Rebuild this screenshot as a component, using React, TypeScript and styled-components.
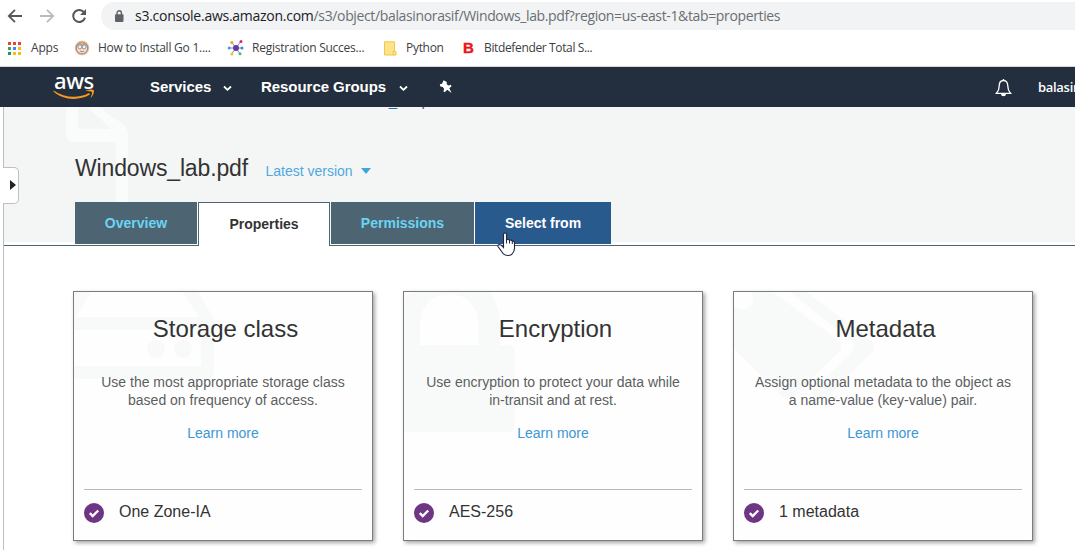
import React from "react";
import styled, { createGlobalStyle } from "styled-components";

const GlobalStyle = createGlobalStyle`
  * { box-sizing: border-box; }
  body {
    margin: 0;
    background: #fff;
    overflow: hidden;
    font-family: "Liberation Sans", Arial, sans-serif;
  }
`;

const Page = styled.div`
  width: 1075px;
  height: 550px;
  display: flex;
  flex-direction: column;
  overflow: hidden;
`;

const Toolbar = styled.div`
  height: 32px;
  flex: none;
  display: flex;
  align-items: center;
  padding-left: 7px;
`;

const ToolIcon = styled.svg`
  flex: none;
  display: block;
  width: 16px;
  height: 16px;
  margin-right: 16px;
`;

const AddressBar = styled.div`
  flex: 1;
  height: 28px;
  margin-left: -2px;
  border-radius: 14px 0 0 14px;
  background: #f1f3f4;
  display: flex;
  align-items: center;
  padding-left: 13px;
  font: 14px/28px "Open Sans", "Noto Sans", sans-serif;
  letter-spacing: -0.36px;
  color: #6b6f73;
  white-space: nowrap;
  svg { margin-right: 11px; flex: none; }
  b { font-weight: 400; color: #202124; letter-spacing: -0.26px; }
`;

const Bookmarks = styled.div`
  height: 35px;
  flex: none;
  display: flex;
  align-items: center;
  padding: 0 0 2px 7px;
  border-bottom: 1px solid #d5d8da;
`;

const Bookmark = styled.div<{ $w: number; $gap: number; $ls: number }>`
  flex: none;
  width: ${(p) => p.$w}px;
  display: flex;
  align-items: center;
  gap: ${(p) => p.$gap}px;
  font: 12px/16px "Open Sans", "Noto Sans", sans-serif;
  letter-spacing: ${(p) => p.$ls}px;
  color: #3c4043;
  white-space: nowrap;
  svg { flex: none; display: block; }
`;

const LetterIcon = styled.span`
  width: 13px;
  flex: none;
  font: 700 15px/16px "Liberation Sans", Arial, sans-serif;
  letter-spacing: 0;
  padding-left: 1px;
  color: #ee1313;
  -webkit-text-stroke: 0.4px #ee1313;
`;

const Nav = styled.div`
  height: 40px;
  flex: none;
  background: #232f3e;
  color: #fff;
  display: flex;
  align-items: center;
  padding-left: 53px;
  font-weight: 700;
  font-size: 15px;
`;

const Logo = styled.div`
  width: 42px;
  height: 40px;
  margin-right: 55px;
  display: flex;
  flex-direction: column;
  padding-top: 2px;
  font: 500 22px/22px "Noto Sans", "Open Sans", sans-serif;
  letter-spacing: -0.4px;
  span { padding-left: 1px; height: 20px; }
  svg { display: block; }
`;

const NavItem = styled.div<{ $w: number }>`
  width: ${(p) => p.$w}px;
  margin-right: 29px;
  display: flex;
  align-items: center;
  justify-content: space-between;
  letter-spacing: -0.05px;
  padding-bottom: 2px;
  white-space: nowrap;
  svg { margin-top: 5px; }
`;

const Pin = styled.svg`
  margin-left: 2px;
`;

const NavRight = styled.div`
  margin-left: auto;
  width: 80px;
  flex: none;
  overflow: hidden;
  display: flex;
  align-items: center;
  gap: 26px;
  white-space: nowrap;
  font: 600 13px/20px "Open Sans", "Noto Sans", sans-serif;
  letter-spacing: -0.3px;
  svg { flex: none; margin-top: 1px; }
`;

const Content = styled.div`
  flex: 1;
  margin-left: 3px;
  border-left: 1px solid #bfbfbf;
  display: flex;
  flex-direction: column;
  position: relative;
`;

const Handle = styled.div`
  position: absolute;
  left: -1px;
  top: 60px;
  width: 16px;
  height: 37px;
  background: #fff;
  border: 1px solid #bfbfbf;
  border-left: 0;
  border-radius: 0 5px 5px 0;
  display: flex;
  align-items: center;
  justify-content: flex-end;
  padding: 0 2px 2px 0;
`;

const Header = styled.div`
  position: relative;
  height: 139px;
  flex: none;
  overflow: hidden;
  background: linear-gradient(#f4f6f6 135px, #fff 135px, #fff 138px, #4d6572 138px);
`;

const HeaderArt = styled.svg`
  position: absolute;
  left: 0;
  top: 0;
`;

const HeaderBody = styled.div`
  position: relative;
  height: 139px;
  padding-left: 71px;
  display: flex;
  flex-direction: column;
`;

const Crumb = styled.div`
  height: 20px;
  flex: none;
  margin-top: -16px;
  padding-left: 253px;
  font-size: 15px;
  line-height: 20px;
  color: #2b6a9a;
`;

const TitleRow = styled.div`
  height: 91px;
  flex: none;
  padding-top: 23px;
  display: flex;
  align-items: center;
  gap: 17.5px;
`;

const Title = styled.h1`
  margin: 0;
  width: 173px;
  font-size: 23px;
  letter-spacing: -0.15px;
  line-height: 36px;
  font-weight: 400;
  color: #333;
  white-space: nowrap;
`;

const Version = styled.div`
  display: flex;
  align-items: center;
  gap: 8px;
  padding-top: 6px;
  font-size: 14px;
  line-height: 20px;
  color: #4fa8dd;
`;

const Tabs = styled.div`
  display: flex;
  align-items: flex-start;
  gap: 1px;
`;

const Tab = styled.div<{ $w: number; $kind: "plain" | "active" | "hover" }>`
  width: ${(p) => p.$w}px;
  height: ${(p) => (p.$kind === "active" ? 44 : 42)}px;
  text-align: center;
  line-height: 42px;
  font-size: 14px;
  font-weight: 700;
  color: ${(p) => ({ plain: "#6bd4f2", active: "#333", hover: "#fff" })[p.$kind]};
  background: ${(p) => ({ plain: "#4d6572", active: "#fff", hover: "#295a8e" })[p.$kind]};
  border: ${(p) => (p.$kind === "active" ? "1px solid #4d6572" : "0")};
  border-bottom: 0;
  box-shadow: ${(p) => (p.$kind === "plain" ? "1px 0 0 #fff" : "none")};
`;

const Cursor = styled.svg`
  position: absolute;
  left: 493px;
  top: 125px;
  z-index: 2;
`;

const Cards = styled.div`
  display: flex;
  gap: 30px;
  padding: 45px 0 0 69px;
`;

const Card = styled.div`
  position: relative;
  width: 300px;
  height: 250px;
  flex: none;
  border: 1px solid #7c7c7c;
  background: #fefefe;
  box-shadow: 2px 2px 4px rgba(0, 0, 0, 0.35);
  padding: 0 10px;
  display: flex;
  flex-direction: column;
  text-align: center;
`;

const CardArt = styled.svg`
  position: absolute;
  left: 0;
  top: 0;
  fill: #f8faf9;
`;

const CardTitle = styled.h2`
  position: relative;
  margin: 20px 0 0 5px;
  font-size: 24px;
  line-height: 34px;
  font-weight: 400;
  color: #333;
`;

const CardText = styled.p`
  position: relative;
  margin: 27px -10px 0;
  font-size: 14px;
  line-height: 18px;
  color: #5c5f61;
`;

const LearnMore = styled.a`
  position: relative;
  margin-top: 15px;
  font-size: 14px;
  line-height: 18px;
  color: #3c97d3;
`;

const Status = styled.div`
  margin-top: auto;
  height: 51px;
  border-top: 1px solid #b9b9b9;
  display: flex;
  align-items: flex-start;
  padding-top: 12px;
  gap: 15px;
  font-size: 16px;
  line-height: 20px;
  color: #333;
  svg { margin-top: 1px; flex: none; }
`;

const Chevron = () => (
  <svg width="9" height="7" viewBox="0 0 9 7" fill="none" stroke="#fff" strokeWidth="1.8">
    <path d="M1 1.5 4.5 4.8 8 1.5" />
  </svg>
);

const storageArt = (
  <>
    <path d="M0 0H17L2 25H125L108 0H124L139 25Q140 27 140 30V79Q140 87 132 87H0V74H124Q127 74 127 71V38H0Z" />
    <circle cx="82" cy="57" r="9" />
    <circle cx="109" cy="57" r="9" />
  </>
);

const lockArt = (
  <path
    fillRule="evenodd"
    d="M0 7Q3 2 7 0H86Q96 14 96 31V53H103Q111 53 111 61V132Q111 140 103 140H0ZM16 53V31A29 29 0 0 1 74.500 31V53Z"
  />
);

const tagArt = (
  <>
    <path d="M56 0H72L137 48Q143 54 138 60L96 103Q89 109 81 105L76 101 118 60Q123 54 118 49Z" />
    <path d="M17 0H39L104 48Q110 54 105 60L60 103Q54 109 48 104L0 57V13A9.500 9.500 0 0 0 17 0Z" />
  </>
);

const cards = [
  { title: "Storage class", lines: ["Use the most appropriate storage class", "based on frequency of access."], status: "One Zone-IA", art: storageArt },
  { title: "Encryption", lines: ["Use encryption to protect your data while", "in-transit and at rest."], status: "AES-256", art: lockArt },
  { title: "Metadata", lines: ["Assign optional metadata to the object as", "a name-value (key-value) pair."], status: "1 metadata", art: tagArt },
];

const appColors = ["#ea4335", "#ea4335", "#ea4335", "#34a853", "#4285f4", "#fbbc05", "#1e9b50", "#fbbc05", "#fbbc05"];

export default function App() {
  return (
    <Page>
      <GlobalStyle />
      <Toolbar>
        <ToolIcon viewBox="0 0 16 16" fill="none" stroke="#55585c" strokeWidth="1.8">
          <path d="M15 8H2M8 1.800 1.800 8 8 14.200" />
        </ToolIcon>
        <ToolIcon viewBox="0 0 16 16" fill="none" stroke="#b9bbbd" strokeWidth="1.8">
          <path d="M1 8H14M8 1.800 14.200 8 8 14.200" />
        </ToolIcon>
        <ToolIcon viewBox="0 0 16 16" fill="none" stroke="#55585c" strokeWidth="2">
          <path d="M13.300 4.700A6 6 0 1 0 14 9.600" />
          <path d="M15 1V7H9Z" fill="#55585c" stroke="none" />
        </ToolIcon>
        <AddressBar>
          <svg width="10" height="12" viewBox="0 0 10 12">
            <rect x="1" y="4.3" width="8.5" height="7.7" rx="1" fill="#5f6368" />
            <path d="M3 5V3A2.200 2.200 0 0 1 7.400 3V5" fill="none" stroke="#5f6368" strokeWidth="1.4" />
          </svg>
          <span>
            <b>s3.console.aws.amazon.com</b>/s3/object/balasinorasif/Windows_lab.pdf?region=us-east-1&amp;tab=properties
          </span>
        </AddressBar>
      </Toolbar>
      <Bookmarks>
        <Bookmark $w={67} $gap={9} $ls={-0.2}>
          <svg width="15" height="15" viewBox="0 0 15 15">
            {appColors.map((c, i) => (
              <rect key={i} x={1 + (i % 3) * 5} y={1 + Math.floor(i / 3) * 5} width="3" height="3" fill={c} />
            ))}
          </svg>
          Apps
        </Bookmark>
        <Bookmark $w={153} $gap={8} $ls={-0.24}>
          <svg width="16" height="16" viewBox="0 0 16 16">
            <circle cx="8" cy="8" r="7.4" fill="#efcfb3" />
            <circle cx="8" cy="8" r="5.8" fill="#f6e2d2" stroke="#a98b79" strokeWidth="1.3" />
            <path d="M3.500 5.500Q5 2.300 8 2.300T12.500 5.500Z" fill="#d9ab80" />
            <circle cx="5.9" cy="6.9" r="2" fill="#eef3fa" stroke="#66718a" strokeWidth=".7" />
            <circle cx="10.1" cy="6.9" r="2" fill="#eef3fa" stroke="#66718a" strokeWidth=".7" />
            <path d="M6 11Q8 12.500 10 11" fill="none" stroke="#936b50" strokeWidth=".8" />
          </svg>
          How to Install Go 1....
        </Bookmark>
        <Bookmark $w={156} $gap={8} $ls={-0.24}>
          <svg width="17" height="16" viewBox="0 0 17 16">
            <path d="M2 8H15M4.500 2 9 8 4.500 14M14 1 9 8 13 14" stroke="#7866b5" strokeWidth=".8" fill="none" />
            <circle cx="9" cy="8" r="3" fill="#663aa0" />
            <circle cx="2.2" cy="8" r="1.5" fill="#3e9be6" />
            <circle cx="15" cy="8" r="1.5" fill="#3e83dc" />
            <circle cx="4.8" cy="2.5" r="1.5" fill="#f3a12b" />
            <circle cx="14" cy="1.6" r="1.5" fill="#dc246d" />
            <circle cx="4.8" cy="14" r="1.5" fill="#f1c22e" />
            <circle cx="13" cy="13.7" r="1.5" fill="#4fb866" />
          </svg>
          Registration Succes...
        </Bookmark>
        <Bookmark $w={79} $gap={9} $ls={-0.3}>
          <svg width="14" height="15" viewBox="0 0 14 15">
            <path d="M1.500 .8H11.500V14H1.500Z" fill="#ffe38a" stroke="#ecc94b" />
            <path d="M10 10.500H13V14H10Z" fill="#ffe38a" stroke="#ecc94b" />
          </svg>
          Python
        </Bookmark>
        <Bookmark $w={150} $gap={9} $ls={-0.36}>
          <LetterIcon>B</LetterIcon>
          Bitdefender Total S...
        </Bookmark>
      </Bookmarks>
      <Nav>
        <Logo>
          <span>aws</span>
          <svg width="42" height="12" viewBox="0 0 42 12">
            <path d="M.5 1.500C12 9.500 26 9.500 36 4L37 5.500C26 12 10 11.500 .5 2.500Z" fill="#f7981f" />
            <path d="M32.500 2C35 .5 39.500 0 40.800 1.200 41.500 3 40 7 37.500 9 38.500 6.500 39.500 4 38.800 3 38 2.200 35 2.200 32.500 2Z" fill="#f7981f" />
          </svg>
        </Logo>
        <NavItem $w={82}>
          Services
          <Chevron />
        </NavItem>
        <NavItem $w={147}>
          Resource Groups
          <Chevron />
        </NavItem>
        <Pin width="14" height="14" viewBox="0 0 14 14">
          <path fill="#fff" d="M4.600.3 7.800 2 7.700 4.300 9.500 5.600 11.800 4.800 12.500 6.200 10.300 8.200 12.600 13 8.300 9.800 5.600 12.200 4.400 11.300 5.200 8.900 3.700 7 1.400 6.600.8 4.200 3 3.700Z" />
        </Pin>
        <NavRight>
          <svg width="17" height="18" viewBox="0 0 17 18" fill="none" stroke="#fff" strokeWidth="1.3">
            <path d="M8.500 1.500C5.500 1.500 4.200 4 4.200 7 4.200 11.500 3 12.500 1.300 14.400H15.700C14 12.500 12.800 11.500 12.800 7 12.800 4 11.500 1.500 8.500 1.500Z" />
            <path d="M6 15H11Q11 17.300 8.500 17.300T6 15Z" fill="#fff" stroke="none" />
            <path d="M8.500 0V2" />
          </svg>
          balasinorasif
        </NavRight>
      </Nav>
      <Content>
        <Header>
          <HeaderArt width="140" height="135" viewBox="0 0 140 135" fill="#fafbfb">
            <path fillRule="evenodd" d="M62 0H95L119 17Q124 21 124 27V135H112V35H70Q62 35 62 27ZM74 0V22H106Q105 20 103 18L83 0Z" />
          </HeaderArt>
          <HeaderBody>
            <Crumb>Windows_lab.pdf</Crumb>
            <TitleRow>
              <Title>Windows_lab.pdf</Title>
              <Version>
                Latest version
                <svg width="10" height="6" viewBox="0 0 10 6"><path d="M0 0H10L5 6Z" fill="#3fa5df" /></svg>
              </Version>
            </TitleRow>
            <Tabs>
              <Tab $w={122} $kind="plain">Overview</Tab>
              <Tab $w={132} $kind="active">Properties</Tab>
              <Tab $w={143} $kind="plain">Permissions</Tab>
              <Tab $w={136} $kind="hover">Select from</Tab>
            </Tabs>
          </HeaderBody>
        </Header>
        <Handle>
          <svg width="6" height="10" viewBox="0 0 6 10"><path d="M0 0 6 5 0 10Z" fill="#222" /></svg>
        </Handle>
        <Cursor width="20" height="25" viewBox="0 0 20 25">
          <path
            d="M6.500 14.500V2.500Q6.500 1 8 1T9.500 2.500V8Q11.500 6.300 12.500 8.500 14.500 7.300 15.300 9.300 17.500 8.500 17.500 11.500V16Q17.500 19 15.500 21.500 14.500 23.500 11 23.500 7 23.500 5 20L1 14.500Q.5 12.800 2.500 12.500 4 12.500 6.500 15.500Z"
            fill="#fff"
            stroke="#24243a"
            strokeWidth="1.1"
          />
          <path d="M9.500 8V11.500M12.500 8.500V11.500M15.300 9.500V12" stroke="#24243a" strokeWidth="1" />
        </Cursor>
        <Cards>
          {cards.map((c) => (
            <Card key={c.title}>
              <CardArt width="150" height="145" viewBox="0 0 150 145">{c.art}</CardArt>
              <CardTitle>{c.title}</CardTitle>
              <CardText>{c.lines[0]}<br />{c.lines[1]}</CardText>
              <LearnMore>Learn more</LearnMore>
              <Status>
                <svg width="20" height="20" viewBox="0 0 20 20">
                  <circle cx="10" cy="10" r="10" fill="#6f3585" />
                  <path d="M5.800 10.200 8.700 13 14.200 7.500" fill="none" stroke="#fff" strokeWidth="2.4" />
                </svg>
                {c.status}
              </Status>
            </Card>
          ))}
        </Cards>
      </Content>
    </Page>
  );
}
